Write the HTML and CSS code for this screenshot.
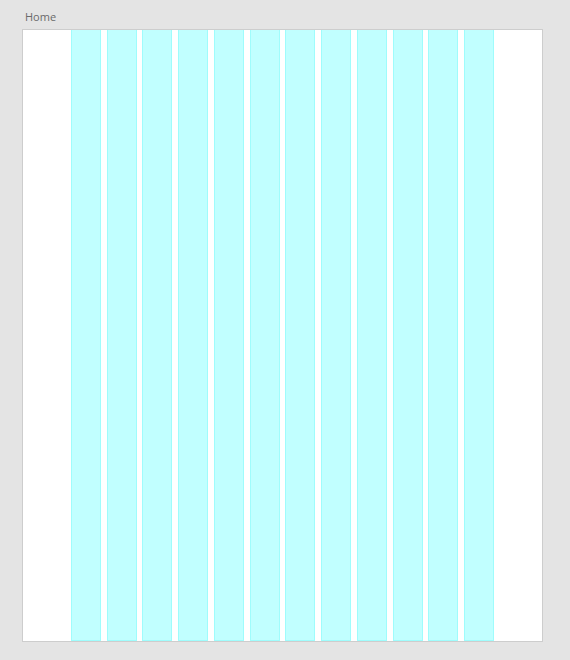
FILE: index.html
```html
<!DOCTYPE html>
<html>
<head>
<meta charset="utf-8">
<link rel="stylesheet" href="styles.css">
</head>
<body>
<div class="page">
  <div class="label">Home</div>
  <div class="artboard">
    <div class="grid">
      <div class="col"></div><div class="col"></div><div class="col"></div><div class="col"></div>
      <div class="col"></div><div class="col"></div><div class="col"></div><div class="col"></div>
      <div class="col"></div><div class="col"></div><div class="col"></div><div class="col"></div>
    </div>
  </div>
</div>
</body>
</html>
```
FILE: styles.css
```css
html, body {
  margin: 0;
  padding: 0;
  background: #e4e4e4;
  width: 570px;
  height: 660px;
  overflow: hidden;
}
.page {
  padding-left: 22px;
}
.label {
  height: 29px;
  box-sizing: border-box;
  padding: 10px 0 0 3px;
  font-family: "Open Sans", "Liberation Sans", sans-serif;
  font-size: 11px;
  line-height: 14px;
  color: #6a6a6a;
}
.artboard {
  width: 521px;
  height: 613px;
  box-sizing: border-box;
  border: 1px solid #cdcdcd;
  background: #fff;
  padding-left: 48px;
}
.grid {
  width: 423px;
  height: 100%;
  display: grid;
  grid-template-columns: repeat(12, 1fr);
  column-gap: 5.7px;
}
.col {
  background: #c1ffff;
  border-left: 1px solid #9ffcfc;
  border-right: 1px solid #9ffcfc;
  border-bottom: 1px solid #9ffcfc;
}
```
